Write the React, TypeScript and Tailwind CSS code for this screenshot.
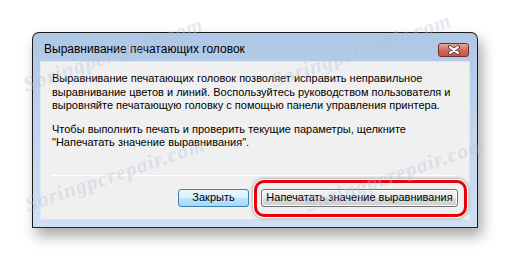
import React from "react";

const Watermark = ({ x, y }: { x: number; y: number }) => (
  <div
    className="absolute pointer-events-none text-[21px] tracking-[1px] italic font-bold text-[#b4c0dc] opacity-35 whitespace-nowrap"
    style={{ left: x, top: y, transform: "rotate(-19deg)", transformOrigin: "left center", fontFamily: '"Liberation Serif", serif' }}
  >
    Soringpcrepair.com
  </div>
);

export default function App() {
  return (
    <div
      className="relative w-[511px] h-[261px] bg-white overflow-hidden"
      style={{ fontFamily: '"Liberation Sans", Arial, sans-serif' }}
    >
      <div className="absolute left-[32px] top-[32px] w-[446px] h-[196px] rounded-t-[7px] border border-[#1c1c1c] border-b-[#10303a] bg-gradient-to-b from-[#aec7e6] via-[#c0d5ee] to-[#cfe0f4] shadow-[4px_8px_14px_rgba(0,0,0,0.35)] flex flex-col">
        {/* title bar */}
        <div className="h-[28px] flex items-start pl-[11px] pr-[8px] pt-[9px] justify-between">
          <span className="text-[12px] leading-[15px] text-black">Выравнивание печатающих головок</span>
          <div className="mt-[1px] w-[31px] h-[14px] rounded-[3px] border border-[#7a2a20] bg-gradient-to-b from-[#e8aa9c] via-[#d06a5c] to-[#c0584a] flex items-center justify-center">
            <svg width="14" height="10" viewBox="0 0 14 10">
              <path d="M3 2 L11 8 M11 2 L3 8" stroke="#3a3a3a" strokeWidth="4" strokeLinecap="round" />
              <path d="M3 2 L11 8 M11 2 L3 8" stroke="#ffffff" strokeWidth="2.2" strokeLinecap="round" />
            </svg>
          </div>
        </div>
        {/* client */}
        <div className="mx-[7px] mb-[7px] flex-1 bg-[#f0f0f0] border border-[#dbe6f3] flex flex-col px-[11px] pt-[10px] pb-[12px] text-[11px] leading-[13.5px] text-black whitespace-nowrap">
          <p>
            Выравнивание печатающих головок позволяет исправить неправильное
            <br />
            выравнивание цветов и линий. Воспользуйтесь руководством пользователя и
            <br />
            выровняйте печатающую головку с помощью панели управления принтера.
          </p>
          <p className="mt-[10px]">
            Чтобы выполнить печать и проверить текущие параметры, щелкните
            <br />
            "Напечатать значение выравнивания".
          </p>
          <div className="mt-auto h-px bg-[#a0a0a0] border-b border-white mr-[1px]" />
          <div className="mt-[13px] flex justify-end gap-[12px]">
            <div className="w-[71px] h-[18px] rounded-[3px] border border-[#3c7fb1] bg-[linear-gradient(#eaf6fd,#d9f0fc_50%,#bee6fd_50%,#a7d9f5)] flex items-center justify-center">
              Закрыть
            </div>
            <div className="relative">
              <div className="absolute -left-[7px] -right-[9px] -top-[9px] -bottom-[10px] rounded-[10px] border-[3px] border-[#e8000a] shadow-[0_0_0_1px_#ffffff,0_0_3px_2px_rgba(0,0,0,0.25)]" />
              <div className="w-[197px] h-[18px] rounded-[3px] border border-[#707070] bg-[linear-gradient(#f2f2f2,#ebebeb_50%,#dddddd_50%,#cfcfcf)] flex items-center justify-center shadow-[inset_0_0_0_1px_#fbfbfb]">
                Напечатать значение выравнивания
              </div>
            </div>
          </div>
        </div>
      </div>
      <Watermark x={24} y={70} />
      <Watermark x={26} y={190} />
      <Watermark x={272} y={66} />
      <Watermark x={306} y={190} />
    </div>
  );
}
